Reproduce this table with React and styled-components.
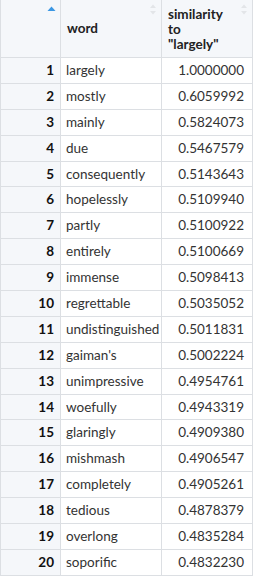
import React from 'react';
import styled, { createGlobalStyle } from 'styled-components';

const rows = [
  ['largely', '1.0000000'],
  ['mostly', '0.6059992'],
  ['mainly', '0.5824073'],
  ['due', '0.5467579'],
  ['consequently', '0.5143643'],
  ['hopelessly', '0.5109940'],
  ['partly', '0.5100922'],
  ['entirely', '0.5100669'],
  ['immense', '0.5098413'],
  ['regrettable', '0.5035052'],
  ['undistinguished', '0.5011831'],
  ["gaiman's", '0.5002224'],
  ['unimpressive', '0.4954761'],
  ['woefully', '0.4943319'],
  ['glaringly', '0.4909380'],
  ['mishmash', '0.4906547'],
  ['completely', '0.4905261'],
  ['tedious', '0.4878379'],
  ['overlong', '0.4835284'],
  ['soporific', '0.4832230'],
];

const GlobalStyle = createGlobalStyle`
  body {
    margin: 0;
    background: #fff;
    font-family: Lato, "Liberation Sans", sans-serif;
  }
`;

const SortIcon = ({ active }) =>
  active ? (
    <svg width="9" height="5" viewBox="0 0 9 5">
      <path d="M0.5 5 L4.5 0.5 L8.5 5 Z" fill="#3b97e3" />
    </svg>
  ) : (
    <svg width="6" height="13" viewBox="0 0 6 13">
      <path d="M0 5 L3 1.5 L6 5 Z" fill="#e3e5e8" />
      <path d="M0 8 L3 11.5 L6 8 Z" fill="#e3e5e8" />
    </svg>
  );

const App = () => {
  return (
    <>
      <GlobalStyle />
      <Table>
        <HeadCell>
          <SortSlot $active>
            <SortIcon active />
          </SortSlot>
        </HeadCell>
        <HeadCell>
          word
          <SortSlot>
            <SortIcon />
          </SortSlot>
        </HeadCell>
        <HeadCell>
          similarity
          <br />
          to
          <br />
          "largely"
          <SortSlot>
            <SortIcon />
          </SortSlot>
        </HeadCell>
        {rows.map(([word, value], i) => (
          <React.Fragment key={word}>
            <IndexCell>{i + 1}</IndexCell>
            <Cell>{word}</Cell>
            <Cell $numeric>{value}</Cell>
          </React.Fragment>
        ))}
      </Table>
    </>
  );
};

const Table = styled.div`
  display: grid;
  grid-template-columns: 60px 101px 91px;
  grid-template-rows: 58px;
  grid-auto-rows: 25.9px;
  width: 253px;
  border-left: 1px solid #dcdfe3;
  box-sizing: border-box;
  color: #333;
  font-size: 13.5px;
  line-height: 15px;
`;

const BaseCell = styled.div`
  box-sizing: border-box;
  border-right: 1px solid #dcdfe3;
  border-bottom: 1px solid #dcdfe3;
  display: flex;
  align-items: center;
  padding: 0 6px 0 5px;
  white-space: nowrap;
`;

const HeadCell = styled(BaseCell)`
  position: relative;
  display: block;
  padding: 7px 16px 0 6px;
  background: #f5f7fa;
  font-weight: 700;
  color: #222;

  &:nth-child(2) {
    padding-top: 21px;
  }
`;

const SortSlot = styled.span`
  position: absolute;
  top: ${p => (p.$active ? '6px' : '3px')};
  right: ${p => (p.$active ? '4px' : '5px')};
  line-height: 0;
`;

const IndexCell = styled(BaseCell)`
  justify-content: flex-end;
  background: #f5f7fa;
  font-weight: 700;
  color: #111;
`;

const Cell = styled(BaseCell)`
  justify-content: ${p => (p.$numeric ? 'flex-end' : 'flex-start')};
  padding-right: ${p => (p.$numeric ? '8px' : '6px')};
  background: #fff;
`;

export default App;
